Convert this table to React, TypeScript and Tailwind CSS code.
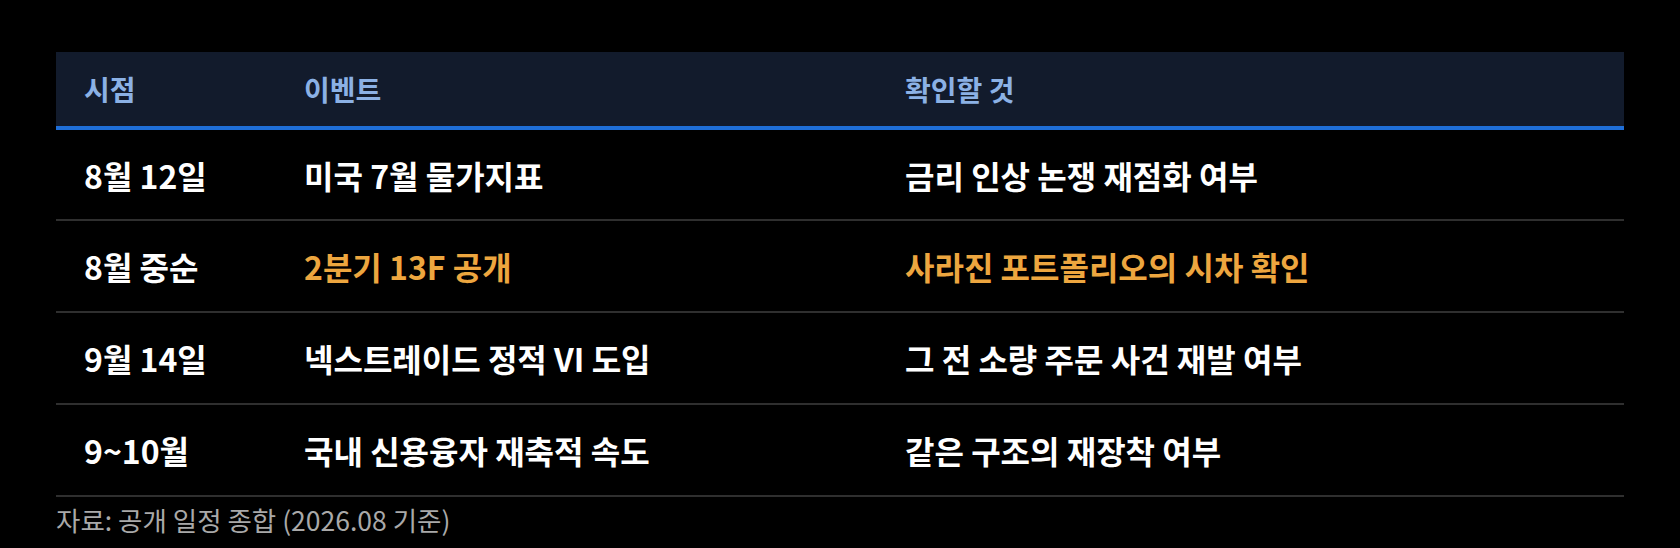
import React from "react";

const rows = [
  { t: "8월 12일", e: "미국 7월 물가지표", c: "금리 인상 논쟁 재점화 여부", hi: false },
  { t: "8월 중순", e: "2분기 13F 공개", c: "사라진 포트폴리오의 시차 확인", hi: true },
  { t: "9월 14일", e: "넥스트레이드 정적 VI 도입", c: "그 전 소량 주문 사건 재발 여부", hi: false },
  { t: "9~10월", e: "국내 신용융자 재축적 속도", c: "같은 구조의 재장착 여부", hi: false },
];

export default function App() {
  return (
    <div
      className="min-h-[548px] w-[1680px] bg-black pt-[52px] pl-[56px]"
      style={{ fontFamily: '"Noto Sans CJK KR", "Noto Sans", sans-serif' }}
    >
      <div className="w-[1568px]">
        <div className="grid grid-cols-[220px_600px_1fr] h-[78px] bg-[#121b2c] border-b-4 border-[#1f6fd8] items-center text-[28px] font-bold text-[#8bb1e5]">
          <div className="pl-[28px]">시점</div>
          <div className="pl-[28px]">이벤트</div>
          <div className="pl-[29px]">확인할 것</div>
        </div>
        {rows.map((r, i) => (
          <div
            key={i}
            className={
              (i === 0 ? "h-[91px] " : "h-[92px] ") +
              "grid grid-cols-[220px_600px_1fr] border-b-2 border-[#2f2f2f] items-center text-[32px] font-semibold text-white"
            }
          >
            <div className="pl-[28px]">{r.t}</div>
            <div className={r.hi ? "pl-[28px] font-bold text-[#eda63f]" : "pl-[28px]"}>{r.e}</div>
            <div className={r.hi ? "pl-[29px] font-bold text-[#eda63f]" : "pl-[29px]"}>{r.c}</div>
          </div>
        ))}
        <div className="pt-[5px] text-[26.5px] leading-[36px] text-[#a9a9a9]">자료: 공개 일정 종합 (2026.08 기준)</div>
      </div>
    </div>
  );
}
